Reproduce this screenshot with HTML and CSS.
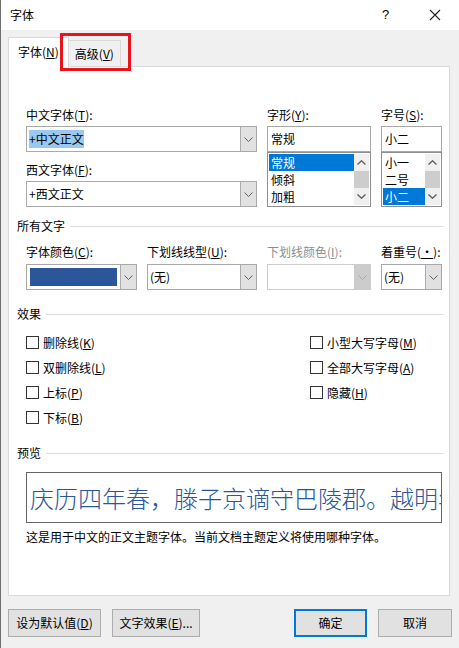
FILE: index.html
```html
<!DOCTYPE html>
<html lang="zh-CN">
<head>
<meta charset="utf-8">
<title>字体</title>
<link rel="stylesheet" href="styles.css">
</head>
<body>
<div class="window">
  <div class="titlebar">
    <span class="title">字体</span>
    <span class="help">?</span>
    <span class="close"><svg width="12" height="12" viewBox="0 0 12 12"><path d="M1 1L11 11M11 1L1 11" stroke="#222" stroke-width="1.1" fill="none"/></svg></span>
  </div>

  <div class="tabs">
    <div class="tab active">字体(<u>N</u>)</div>
    <div class="tab">高级(<u>V</u>)</div>
  </div>
  <div class="annot"></div>

  <div class="panel">
    <div class="topgrid fields">
      <div class="col">
        <div class="lbl">中文字体(<u>T</u>):</div>
        <div class="combo">
          <div class="val"><span class="hl">+中文正文</span></div>
          <div class="btn"><svg width="9" height="5" viewBox="0 0 9 5"><path d="M0.5 0.5L4.5 4.5L8.5 0.5" stroke="#606060" fill="none"/></svg></div>
        </div>
        <div class="lbl lbl2">西文字体(<u>F</u>):</div>
        <div class="combo">
          <div class="val">+西文正文</div>
          <div class="btn"><svg width="9" height="5" viewBox="0 0 9 5"><path d="M0.5 0.5L4.5 4.5L8.5 0.5" stroke="#606060" fill="none"/></svg></div>
        </div>
      </div>
      <div class="col">
        <div class="lbl">字形(<u>Y</u>):</div>
        <div class="textbox">常规</div>
        <div class="listbox">
          <div class="items">
            <div class="item sel">常规</div>
            <div class="item">倾斜</div>
            <div class="item">加粗</div>
          </div>
          <div class="sbar">
            <div class="arr"><svg width="9" height="5" viewBox="0 0 9 5"><path d="M0.5 4.5L4.5 0.8L8.5 4.5" stroke="#606060" stroke-width="1.4" fill="none"/></svg></div>
            <div class="thumb"></div>
            <div class="arr"><svg width="9" height="5" viewBox="0 0 9 5"><path d="M0.5 0.5L4.5 4.2L8.5 0.5" stroke="#606060" stroke-width="1.4" fill="none"/></svg></div>
          </div>
        </div>
      </div>
      <div class="col">
        <div class="lbl">字号(<u>S</u>):</div>
        <div class="textbox">小二</div>
        <div class="listbox">
          <div class="items">
            <div class="item">小一</div>
            <div class="item">二号</div>
            <div class="item sel">小二</div>
          </div>
          <div class="sbar">
            <div class="arr"><svg width="9" height="5" viewBox="0 0 9 5"><path d="M0.5 4.5L4.5 0.8L8.5 4.5" stroke="#606060" stroke-width="1.4" fill="none"/></svg></div>
            <div class="thumb"></div>
            <div class="arr"><svg width="9" height="5" viewBox="0 0 9 5"><path d="M0.5 0.5L4.5 4.2L8.5 0.5" stroke="#606060" stroke-width="1.4" fill="none"/></svg></div>
          </div>
        </div>
      </div>
    </div>

    <div class="section s1"><span>所有文字</span><i></i></div>
    <div class="rowgrid fields">
      <div class="col">
        <div class="lbl">字体颜色(<u>C</u>):</div>
        <div class="combo color">
          <div class="val"><div class="swatch"></div></div>
          <div class="btn"><svg width="9" height="5" viewBox="0 0 9 5"><path d="M0.5 0.5L4.5 4.5L8.5 0.5" stroke="#606060" fill="none"/></svg></div>
        </div>
      </div>
      <div class="col">
        <div class="lbl">下划线线型(<u>U</u>):</div>
        <div class="combo">
          <div class="val">(无)</div>
          <div class="btn"><svg width="9" height="5" viewBox="0 0 9 5"><path d="M0.5 0.5L4.5 4.5L8.5 0.5" stroke="#606060" fill="none"/></svg></div>
        </div>
      </div>
      <div class="col">
        <div class="lbl dis">下划线颜色(<u>I</u>):</div>
        <div class="combo disabled">
          <div class="val"></div>
          <div class="btn"><svg width="9" height="5" viewBox="0 0 9 5"><path d="M0.5 0.5L4.5 4.5L8.5 0.5" stroke="#a8a8a8" fill="none"/></svg></div>
        </div>
      </div>
      <div class="col">
        <div class="lbl">着重号(<u>·</u>):</div>
        <div class="combo">
          <div class="val">(无)</div>
          <div class="btn"><svg width="9" height="5" viewBox="0 0 9 5"><path d="M0.5 0.5L4.5 4.5L8.5 0.5" stroke="#606060" fill="none"/></svg></div>
        </div>
      </div>
    </div>

    <div class="section s2"><span>效果</span><i></i></div>
    <div class="checks fields">
      <label class="chk"><span class="box"></span>删除线(<u>K</u>)</label>
      <label class="chk"><span class="box"></span>小型大写字母(<u>M</u>)</label>
      <label class="chk"><span class="box"></span>双删除线(<u>L</u>)</label>
      <label class="chk"><span class="box"></span>全部大写字母(<u>A</u>)</label>
      <label class="chk"><span class="box"></span>上标(<u>P</u>)</label>
      <label class="chk"><span class="box"></span>隐藏(<u>H</u>)</label>
      <label class="chk"><span class="box"></span>下标(<u>B</u>)</label>
    </div>

    <div class="section s3"><span>预览</span><i></i></div>
    <div class="preview fields"><span class="ptext">庆历四年春，滕子京谪守巴陵郡。越明年</span></div>
    <div class="desc fields">这是用于中文的正文主题字体。当前文档主题定义将使用哪种字体。</div>
  </div>

  <div class="buttons">
    <div class="button b1">设为默认值(<u>D</u>)</div>
    <div class="button b2">文字效果(<u>E</u>)...</div>
    <div class="button b3 default">确定</div>
    <div class="button b4">取消</div>
  </div>
</div>
</body>
</html>
```

FILE: styles.css
```css
* { box-sizing: border-box; }
html, body { margin: 0; padding: 0; }
body {
  width: 459px;
  height: 648px;
  overflow: hidden;
  background: #f0f0f0;
  font-family: "Noto Sans CJK SC", "Noto Sans", sans-serif;
  font-size: 12px;
  color: #000;
}
u { text-decoration: underline; text-underline-offset: 1px; }
.window {
  position: relative;
  width: 459px;
  height: 648px;
  border-left: 1px solid #6f6f6f;
  background: #f0f0f0;
}
.titlebar {
  height: 30px;
  background: #fff;
  display: flex;
  align-items: center;
  line-height: 16px;
  padding-left: 9px;
}
.title { flex: 1; }
.help { width: 12px; margin-right: 35px; font-family: "Liberation Sans", sans-serif; font-size: 13px; }
.close { width: 12px; height: 12px; margin-right: 18px; display: flex; }

.tabs {
  display: flex;
  align-items: flex-end;
  height: 36px;
  padding-left: 7px;
}
.tab {
  height: 26px;
  padding: 0 6px;
  border: 1px solid #d9d9d9;
  border-bottom: none;
  line-height: 26px;
  margin-left: -1px;
  white-space: nowrap;
}
.tab.active {
  position: relative;
  z-index: 1;
  margin-left: 0;
  height: 30px;
  background: #fff;
  margin-bottom: -1px;
  padding: 0 9px;
  line-height: 28px;
}
.annot {
  position: absolute;
  left: 59px;
  top: 33px;
  width: 71px;
  height: 38px;
  border: 3px solid #e8141c;
  z-index: 2;
}

.panel {
  margin-left: 7px;
  width: 442px;
  height: 530px;
  background: #fff;
  border: 1px solid #d9d9d9;
  padding: 40px 6px 0 8px;
}
.fields { margin-left: 9px; }
.lbl { height: 16px; line-height: 16px; margin-bottom: 3px; white-space: nowrap; }
.lbl2 { margin-top: 10px; }
.lbl.dis { color: #8d8d8d; }
.col { display: flex; flex-direction: column; }

.topgrid {
  display: grid;
  grid-template-columns: 231px 104px 61px;
  column-gap: 10px;
}
.combo {
  height: 26px;
  border: 1px solid #a9a9a9;
  display: flex;
  background: #fff;
}
.combo .val {
  flex: 1;
  padding-left: 2px;
  display: flex;
  align-items: center;
  line-height: 16px;
  white-space: nowrap;
}
.combo .hl { background: #99c9ef; padding: 1px 0; }
.combo .btn {
  width: 16px;
  background: #e1e1e1;
  border-left: 1px solid #adadad;
  display: flex;
  align-items: center;
  justify-content: center;
}
.combo.disabled { border-color: #cccccc; }
.combo.disabled .btn { background: #cccccc; border-left-color: #cccccc; }
.combo.color .val { padding: 3px; }
.swatch { width: 87px; height: 18px; background: #2b579a; }

.textbox {
  height: 26px;
  border: 1px solid #a9a9a9;
  padding-left: 3px;
  display: flex;
  align-items: center;
  line-height: 16px;
}
.listbox {
  height: 55px;
  border: 1px solid #8f8f8f;
  padding: 1px;
  display: flex;
  background: #fff;
}
.items { flex: 1; }
.item { height: 17px; line-height: 17px; padding-left: 2px; }
.item.sel { background: #0078d7; color: #fff; }
.sbar {
  width: 15px;
  display: flex;
  flex-direction: column;
  background: #f0f0f0;
}
.arr { height: 17px; display: flex; align-items: center; justify-content: center; }
.thumb { height: 17px; background: #cdcdcd; }

.section {
  display: flex;
  align-items: center;
  height: 16px;
  line-height: 16px;
}
.section i { flex: 1; height: 1px; background: #dcdcdc; margin-left: 5px; margin-right: 0; }
.s1 { margin-top: 11px; }
.s2 { margin-top: 16px; }
.s3 { margin-top: 15px; }

.rowgrid {
  margin-top: 10px;
  display: grid;
  grid-template-columns: 111px 110px 104px 61px;
  column-gap: 10px;
}
.rowgrid .lbl { margin-bottom: 4px; }

.checks {
  margin-top: 8px;
  display: grid;
  grid-template-columns: 284px auto;
  grid-auto-rows: 25px;
}
.chk { display: flex; align-items: center; line-height: 16px; }
.box {
  width: 13px;
  height: 13px;
  border: 1px solid #333;
  margin-right: 4px;
  background: #fff;
}

.preview {
  margin-top: 11px;
  height: 51px;
  width: 416px;
  border: 1px solid #646464;
  color: #2b579a;
  font-size: 24px;
  font-weight: 300;
  line-height: 49px;
  padding-left: 3px;
  white-space: nowrap;
  overflow: hidden;
}
.desc { margin-top: 6px; line-height: 16px; height: 16px; }

.buttons {
  display: flex;
  margin-top: 13px;
  padding-left: 7px;
}
.button {
  height: 28px;
  background: #e1e1e1;
  border: 1px solid #adadad;
  display: flex;
  align-items: center;
  justify-content: center;
  line-height: 16px;
}
.b1 { width: 93px; }
.b2 { width: 88px; margin-left: 11px; }
.b3 { width: 73px; margin-left: auto; }
.b4 { width: 74px; margin-left: 11px; margin-right: 7px; }
.default { border: 2px solid #0078d7; }
```
